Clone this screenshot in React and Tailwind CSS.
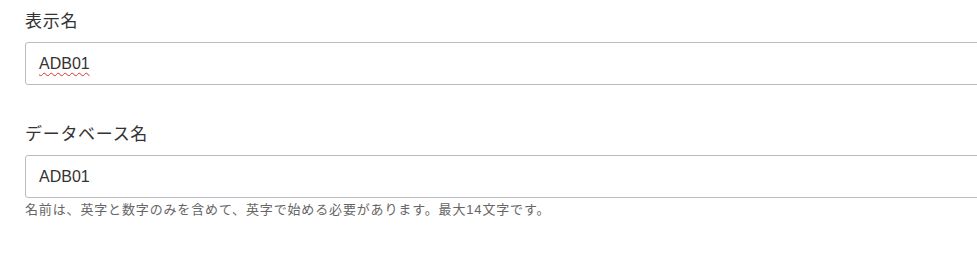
import React from 'react';

const font = { fontFamily: '"Liberation Sans", "Noto Sans CJK JP", sans-serif' };

const Field = ({ label, value, squiggle, help, className = '' }) => (
  <div className={className}>
    <div className="text-[17px] leading-[24px] tracking-[0.7px] text-[#333]">{label}</div>
    <div className="mt-2 flex h-[43px] w-[980px] items-center rounded-[3px] border border-[#b8bcc3] bg-white px-[13px] text-[16px] text-[#333]">
      {squiggle ? (
        <span className="underline decoration-wavy decoration-[#e0302a] decoration-1 underline-offset-[3px]">{value}</span>
      ) : (
        <span>{value}</span>
      )}
    </div>
    {help && <div className="mt-[3px] text-[13px] leading-[18px] tracking-[0.85px] text-[#666]">{help}</div>}
  </div>
);

export default function App() {
  return (
    <div className="h-[255px] w-full overflow-hidden bg-white pl-[25px] pt-[10px]" style={font}>
      <Field label="表示名" value="ADB01" squiggle />
      <Field
        className="mt-[38px]"
        label="データベース名"
        value="ADB01"
        help="名前は、英字と数字のみを含めて、英字で始める必要があります。最大14文字です。"
      />
    </div>
  );
}
